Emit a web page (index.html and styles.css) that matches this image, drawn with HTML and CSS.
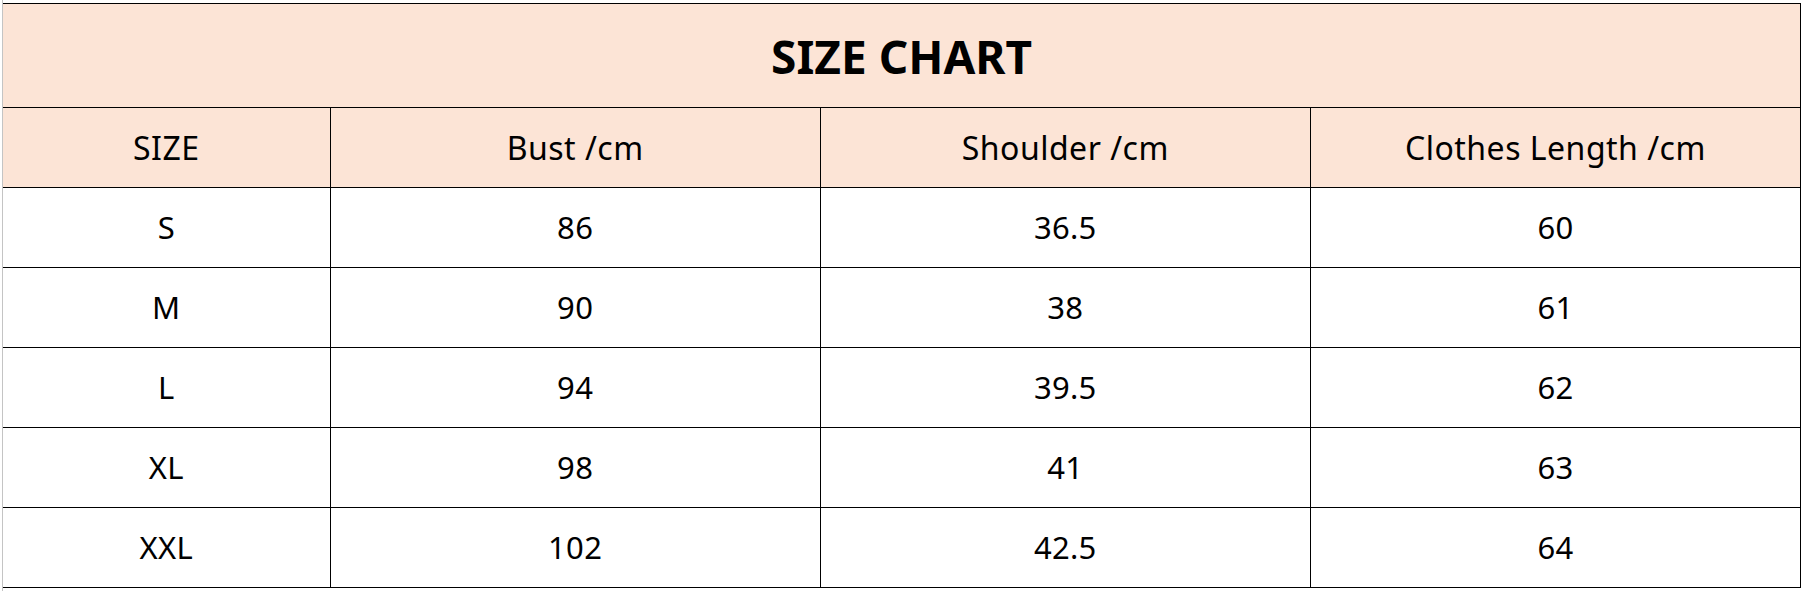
FILE: index.html
```html
<!DOCTYPE html>
<html lang="en">
<head>
<meta charset="utf-8">
<title>Size Chart</title>
<link rel="stylesheet" href="styles.css">
</head>
<body>
<div class="page">
  <table class="chart">
    <colgroup>
      <col class="c-size">
      <col class="c-val">
      <col class="c-val">
      <col class="c-val">
    </colgroup>
    <thead>
      <tr class="title-row"><th colspan="4" class="title">SIZE CHART</th></tr>
      <tr class="head-row">
        <th>SIZE</th>
        <th>Bust /cm</th>
        <th>Shoulder /cm</th>
        <th>Clothes Length /cm</th>
      </tr>
    </thead>
    <tbody>
      <tr><td>S</td><td>86</td><td>36.5</td><td>60</td></tr>
      <tr><td>M</td><td>90</td><td>38</td><td>61</td></tr>
      <tr><td>L</td><td>94</td><td>39.5</td><td>62</td></tr>
      <tr><td>XL</td><td>98</td><td>41</td><td>63</td></tr>
      <tr><td>XXL</td><td>102</td><td>42.5</td><td>64</td></tr>
    </tbody>
  </table>
</div>
</body>
</html>
```
FILE: styles.css
```css
html, body {
  margin: 0;
  padding: 0;
  background: #ffffff;
}

body {
  font-family: "Noto Sans", "Open Sans", sans-serif;
  color: #000;
}

.page {
  margin-left: 2px;
  border-left: 1px solid #c4c4c4;
  height: 591px;
  padding-top: 3px;
  box-sizing: border-box;
}

.chart {
  width: 1798px;
  border-collapse: collapse;
  table-layout: fixed;
}

.c-size { width: 327px; }
.c-val { width: 490px; }

.chart th,
.chart td {
  border: 1px solid #000;
  padding: 0;
  text-align: center;
  vertical-align: middle;
  font-size: 31px;
  font-weight: 400;
  line-height: 1;
  letter-spacing: 0.3px;
}

.chart tr > :first-child { border-left: none; }

.title-row { height: 104px; }
.head-row, .chart tbody tr { height: 80px; }

.chart thead th { background: #fce4d6; }

.chart .head-row th {
  font-size: 32px;
  letter-spacing: 0.5px;
}

.chart th.title {
  font-size: 46px;
  font-weight: 700;
  letter-spacing: 0;
}
```
